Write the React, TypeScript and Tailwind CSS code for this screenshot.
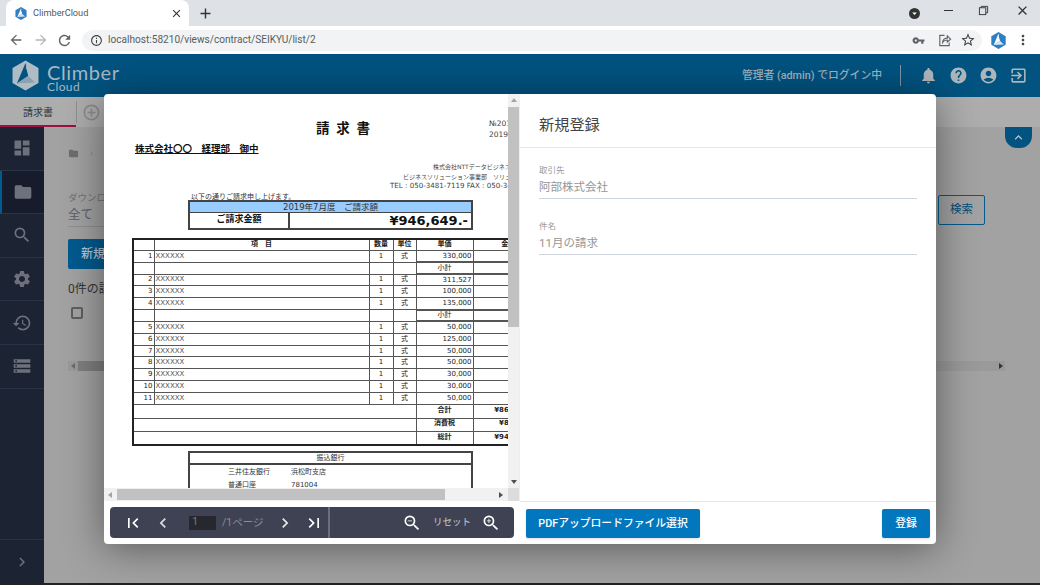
import React from "react";
import {
  MdDashboard, MdFolder, MdSearch, MdSettings, MdHistory, MdStorage, MdNotifications, MdHelp, MdAccountCircle,
  MdExitToApp, MdFirstPage, MdLastPage, MdChevronLeft, MdChevronRight, MdZoomIn, MdZoomOut, MdArrowBack,
  MdArrowForward, MdRefresh, MdInfoOutline, MdVpnKey, MdStarBorder, MdMoreVert, MdAdd, MdClose, MdAddCircleOutline,
  MdExpandLess, MdArrowDropDown,
} from "react-icons/md";

const jp = "font-['Roboto','Noto_Sans_CJK_JP',sans-serif]";
const doc = "font-['DejaVu_Sans','Noto_Sans_CJK_JP',sans-serif]";

function Logo({ a, b, c, className }: { a: string; b: string; c: string; className: string }) {
  return (
    <svg viewBox="0 0 100 112" className={className}>
      <polygon points="50,0 98,28 98,84 50,112 2,84 2,28" fill={a} />
      <polygon points="50,10 18,86 60,58" fill={b} />
      <polygon points="60,58 18,86 86,82" fill={c} />
      <polygon points="50,22 62,56 82,78 68,34" fill={a} />
    </svg>
  );
}

function ShareIcon() {
  return (
    <svg viewBox="0 0 16 16" className="h-[15px] w-[15px]" fill="none" stroke="#5f6368" strokeWidth="1.2">
      <path d="M8 2.5H3v11h10V10" />
      <path d="M6 10c0-3 2.5-4.5 5-4.5V3l3.5 3.5L11 9.5V7.5c-2 0-4 .8-5 2.5z" />
    </svg>
  );
}

function Restore() {
  return (
    <svg viewBox="0 0 12 12" className="h-[11px] w-[11px]" fill="none" stroke="#333" strokeWidth="1">
      <rect x="1.5" y="3" width="7" height="7.5" />
      <path d="M3.5 3V1.5h7V8.5H8.5" />
    </svg>
  );
}

function Chrome() {
  return (
    <div className={`shrink-0 ${jp}`}>
      <div className="flex h-[26px] items-end bg-[#dee1e6]">
        <div className="ml-[6px] flex h-[26px] w-[183px] items-center rounded-t-lg bg-white pl-[9px] pr-[6px]">
          <Logo a="#2f7fc4" b="#ffffff" c="#d5e6f3" className="h-[13px] w-[12px]" />
          <span className="ml-[6px] flex-1 text-[9.2px] text-[#55585c]">ClimberCloud</span>
          <MdClose className="text-[13px] text-[#333]" />
        </div>
        <div className="ml-[8px] flex h-[26px] items-center">
          <MdAdd className="text-[17px] text-[#333]" />
        </div>
        <div className="ml-auto flex h-[26px] items-center">
          <div className="mr-[24px] flex h-[11px] w-[11px] items-center justify-center rounded-full bg-[#333]">
            <MdArrowDropDown className="text-[11px] text-white" />
          </div>
          <div className="mb-[5px] mr-[25px] h-px w-[9px] bg-[#333]" />
          <div className="mb-[5px] mr-[26px]"><Restore /></div>
          <MdClose className="mb-[5px] mr-[10px] text-[15px] text-[#333]" />
        </div>
      </div>
      <div className="flex h-[28px] items-center bg-white">
        <MdArrowBack className="ml-[8px] text-[16px] text-[#5f6368]" />
        <MdArrowForward className="ml-[9px] text-[16px] text-[#b3b6ba]" />
        <MdRefresh className="ml-[7px] text-[17px] text-[#5f6368]" />
        <div className="ml-[9px] flex h-[21px] w-[900px] items-center rounded-full bg-[#f1f3f4] pl-[8px] pr-[6px]">
          <MdInfoOutline className="text-[13px] text-[#444]" />
          <span className="ml-[5px] text-[10.1px] text-[#5a5d60]">localhost:58210/views/contract/SEIKYU/list/2</span>
          <MdVpnKey className="ml-auto text-[13px] text-[#5f6368]" />
          <div className="ml-[12px]"><ShareIcon /></div>
          <MdStarBorder className="ml-[8px] text-[16px] text-[#444]" />
        </div>
        <Logo a="#2f7fc4" b="#ffffff" c="#d5e6f3" className="ml-[9px] h-[17px] w-[15px]" />
        <MdMoreVert className="ml-[9px] text-[16px] text-[#444]" />
      </div>
    </div>
  );
}

function Header() {
  return (
    <div className={`flex h-[43px] shrink-0 items-center bg-[#025380] ${jp}`}>
      <Logo a="#b0bcc4" b="#025380" c="#8ba2b1" className="ml-[12px] h-[31px] w-[27px]" />
      <div className="ml-[8px] flex flex-col pt-[3px] leading-none text-[#a6b8c4]">
        <span className="font-['Lato',sans-serif] text-[20px] leading-[18px] tracking-[0.6px]">Climber</span>
        <span className="font-['Lato',sans-serif] text-[12px] leading-[11px] tracking-[0.4px]">Cloud</span>
      </div>
      <span className="ml-auto pt-[2px] text-[10.8px] font-medium text-[#9fb2bf]">管理者 (admin) でログイン中</span>
      <div className="ml-[18px] h-[21px] w-px bg-[#7d99ab]" />
      <MdNotifications className="ml-[18px] text-[19px] text-[#adb6bb]" />
      <MdHelp className="ml-[11px] text-[19px] text-[#adb6bb]" />
      <MdAccountCircle className="ml-[11px] text-[19px] text-[#adb6bb]" />
      <MdExitToApp className="ml-[11px] mr-[12px] text-[19px] text-[#adb6bb]" />
    </div>
  );
}

function TabBar() {
  return (
    <div className={`flex h-[30px] shrink-0 items-stretch bg-[#adadad] ${jp}`}>
      <div className="flex w-[76px] items-center justify-center border-b-2 border-[#9d1040] pt-[3px] text-[10px] text-[#333]">請求書</div>
      <div className="my-[4px] w-px bg-[#8f8f8f]" />
      <div className="flex items-center pl-[5px]"><MdAddCircleOutline className="text-[19px] text-[#8c8c8c]" /></div>
    </div>
  );
}

function Sidebar() {
  const items = [MdDashboard, MdFolder, MdSearch, MdSettings, MdHistory, MdStorage];
  return (
    <div className="flex w-[44px] shrink-0 flex-col bg-[#1c2333]">
      {items.map((Icon, i) => (
        <div
          key={i}
          className={`flex h-[43.6px] items-center justify-center border-b border-[#2b3346] ${i === 1 ? "border-l-2 border-l-[#025a8f] bg-[#161c2c]" : ""}`}
        >
          <Icon className="text-[20px] text-[#6d717c]" />
        </div>
      ))}
      <div className="mt-auto flex h-[44px] items-center justify-center border-t border-[#2b3346]">
        <MdChevronRight className="text-[18px] text-[#6d717c]" />
      </div>
    </div>
  );
}

function Main() {
  return (
    <div className={`flex flex-1 flex-col bg-[#a2a2a2] ${jp}`}>
      <div className="flex h-[21px] justify-end pr-[8px]">
        <div className="flex h-[21px] w-[27px] items-center justify-center rounded-b-xl bg-[#025380]">
          <MdExpandLess className="text-[15px] text-[#b9c6cf]" />
        </div>
      </div>
      <div className="px-[24px]">
        <div className="flex items-center gap-[8px]">
          <MdFolder className="text-[11px] text-[#6e6e6e]" />
          <MdChevronRight className="text-[9px] text-[#858585]" />
        </div>
        <div className="mt-[33px] flex items-start justify-between pr-[31px]">
          <div>
            <div className="text-[9.5px] leading-[12px] text-[#717171]">ダウンロード</div>
            <div className="mt-[3px] w-[200px] border-b border-[#8f8f8f] pb-[3px] text-[12.5px] leading-[16px] text-[#5d5d5d]">全て</div>
          </div>
          <div className="mt-[3px] flex h-[30px] w-[47px] items-center justify-center rounded-[2px] border border-[#045a8a] text-[11.5px] text-[#034e78]">検索</div>
        </div>
        <div className="mt-[12px] flex h-[30px] w-[74px] items-center justify-center rounded-[2px] bg-[#025a8f] text-[12px] font-medium text-[#b6c8d4]">新規登録</div>
        <div className="mt-[12px] text-[12px] leading-[16px] text-[#333]">0件の該当データ</div>
        <div className="ml-[3px] mt-[10px] h-[12px] w-[12px] rounded-[2px] border-2 border-[#5e5e5e]" />
        <div className="mt-[42px] mr-[11px] flex h-[10px] items-center bg-[#9a9a9a]">
          <div className="ml-[3px] h-0 w-0 border-y-[3px] border-r-[4px] border-y-transparent border-r-[#6b6b6b]" />
          <div className="ml-[3px] h-[10px] w-[300px] bg-[#7f7f7f]" />
          <div className="ml-auto mr-[2px] h-0 w-0 border-y-[3px] border-l-[4px] border-y-transparent border-l-[#333]" />
        </div>
      </div>
    </div>
  );
}

const td = "border border-[#555] px-[1px] align-middle leading-none overflow-hidden whitespace-nowrap";

function Row({ n, price }: { n: string; price: string }) {
  return (
    <tr className="h-[11.85px]">
      <td className={`${td} text-right`}>{n}</td>
      <td className={`${td} text-[#555]`}>XXXXXX</td>
      <td className={`${td} text-center`}>1</td>
      <td className={`${td} text-center`}>式</td>
      <td className={`${td} text-right`}>{price}</td>
      <td className={td}></td>
    </tr>
  );
}

function Sub() {
  return (
    <tr className="h-[11.85px]">
      <td className={td}></td>
      <td className={td}></td>
      <td className={td}></td>
      <td className={td}></td>
      <td className={`${td} border-y-2 border-[#222] text-center`}>小計</td>
      <td className={`${td} border-y-2 border-[#222]`}></td>
    </tr>
  );
}

function Total({ label, v }: { label: string; v: string }) {
  return (
    <tr className="h-[13.7px] font-bold">
      <td colSpan={4} className={td}></td>
      <td className={`${td} pb-[2px] text-center`}>{label}</td>
      <td className={`${td} pb-[2px] pr-[21px] text-right`}>{v}</td>
    </tr>
  );
}

function PdfPage() {
  return (
    <div className={`w-[520px] text-[#222] ${doc}`}>
      <div className="flex h-[45px] items-start">
        <div className="ml-[212px] mt-[25px] text-[13.5px] font-bold leading-[18px] tracking-[1px] text-[#111]">請 求 書</div>
        <div className="ml-[118px] mt-[24px] whitespace-nowrap text-[7.5px] leading-[11px] text-[#444]">
          <div>№2019070001</div>
          <div>2019年7月31日</div>
        </div>
      </div>
      <div className="ml-[31px] mt-[3px] h-[14px] text-[9.5px] font-bold leading-[14px] text-[#111] underline">株式会社〇〇　経理部　御中</div>
      <div className="mt-[6px] whitespace-nowrap text-[6px] leading-[9.5px] text-[#444]">
        <div className="ml-[329px]">株式会社NTTデータビジネスシステムズ</div>
        <div className="ml-[299px]">ビジネスソリューション事業部　ソリューション</div>
        <div className="ml-[286px] text-[7.1px]">TEL : 050-3481-7119 FAX : 050-3481-7120</div>
      </div>
      <div className="ml-[87px] mt-[2px] h-[7px] text-[7px] leading-[9px] text-[#333]">以下の通りご請求申し上げます。</div>
      <div className="ml-[84px] w-[285px] border-2 border-[#444]">
        <div className="h-[11px] border-b border-[#444] bg-[#99ccff] text-center text-[8.5px] leading-[11px] text-[#333]">2019年7月度　ご請求額</div>
        <div className="flex h-[15px] items-center">
          <div className="flex h-full w-[100px] items-center justify-center border-r-2 border-[#444] text-[9px] font-bold text-[#111]">ご請求金額</div>
          <div className="flex-1 pr-[3px] text-right text-[13px] font-bold leading-none text-[#111]">¥946,649.-</div>
        </div>
      </div>
      <table className="ml-[28px] mt-[8px] w-[420px] table-fixed border-collapse border-2 border-[#222] text-[7px]">
        <colgroup>
          <col className="w-[21px]" />
          <col className="w-[215px]" />
          <col className="w-[24px]" />
          <col className="w-[23px]" />
          <col className="w-[57px]" />
          <col className="w-[80px]" />
        </colgroup>
        <tbody>
          <tr className="h-[11.85px] font-bold">
            <td className={td}></td>
            <td className={`${td} text-center`}>項　目</td>
            <td className={`${td} text-center`}>数量</td>
            <td className={`${td} text-center`}>単位</td>
            <td className={`${td} text-center`}>単価</td>
            <td className={`${td} pr-[10px] text-center`}>金額</td>
          </tr>
          <Row n="1" price="330,000" />
          <Sub />
          <Row n="2" price="311,527" />
          <Row n="3" price="100,000" />
          <Row n="4" price="135,000" />
          <Sub />
          <Row n="5" price="50,000" />
          <Row n="6" price="125,000" />
          <Row n="7" price="50,000" />
          <Row n="8" price="50,000" />
          <Row n="9" price="30,000" />
          <Row n="10" price="30,000" />
          <Row n="11" price="50,000" />
          <Total label="合計" v="¥860,590" />
          <Total label="消費税" v="¥86,059" />
          <Total label="総計" v="¥946,649" />
        </tbody>
      </table>
      <div className="ml-[84px] mt-[5px] w-[285px] border-x-2 border-t-2 border-[#444] text-[7px] text-[#333]">
        <div className="h-[12px] border-b-2 border-[#444] text-center leading-[10px]">振込銀行</div>
        <div className="flex h-[12px] items-end pl-[38px]"><span className="w-[63px]">三井住友銀行</span><span>浜松町支店</span></div>
        <div className="flex h-[13px] items-end pl-[38px]"><span className="w-[63px]">普通口座</span><span>781004</span></div>
      </div>
    </div>
  );
}

function Viewer() {
  return (
    <div className="flex w-[416px] shrink-0 flex-col">
      <div className="flex h-[407px] w-[416px] shrink-0 flex-col border-r border-[#eee]">
        <div className="flex min-h-0 flex-1">
          <div className="min-w-0 flex-1 overflow-hidden"><PdfPage /></div>
          <div className="flex w-[11px] shrink-0 flex-col items-center bg-[#f1f1f1]">
            <div className="mt-[4px] h-0 w-0 border-x-[3px] border-b-[4px] border-x-transparent border-b-[#a3a3a3]" />
            <div className="mt-[5px] h-[220px] w-full bg-[#c1c1c1]" />
            <div className="mt-auto mb-[4px] h-0 w-0 border-x-[3px] border-t-[4px] border-x-transparent border-t-[#505050]" />
          </div>
        </div>
        <div className="flex h-[13px] shrink-0 items-center bg-[#f1f1f1]">
          <div className="ml-[4px] h-0 w-0 border-y-[3px] border-r-[4px] border-y-transparent border-r-[#a3a3a3]" />
          <div className="ml-[5px] h-[11px] w-[328px] bg-[#c1c1c1]" />
          <div className="ml-[54px] h-0 w-0 border-y-[3px] border-l-[4px] border-y-transparent border-l-[#505050]" />
          <div className="ml-auto h-[13px] w-[11px] bg-[#dcdcdc]" />
        </div>
      </div>
      <div className={`flex flex-1 items-center pl-[6px] pr-[6px] ${jp}`}>
        <div className="flex h-[31px] w-[404px] items-center rounded-[4px] bg-[#3f4252] text-[#c9cbd1]">
          <div className="flex h-full w-[220px] items-center border-r-2 border-[#6b6e7b] pl-[13px]">
            <MdFirstPage className="text-[20px] text-white" />
            <MdChevronLeft className="ml-[10px] text-[20px] text-[#dfe0e4]" />
            <div className="ml-[16px] flex h-[14px] w-[27px] items-center bg-[#26282f] pl-[3px] text-[11px] text-[#777]">1</div>
            <span className="ml-[6px] text-[10.5px] text-[#8b8d98]">/1ページ</span>
            <MdChevronRight className="ml-[11px] text-[20px] text-[#e8e9ec]" />
            <MdLastPage className="ml-[9px] text-[20px] text-white" />
          </div>
          <MdZoomOut className="ml-[72px] text-[20px] text-white" />
          <span className="ml-[11px] text-[9.5px] font-medium text-[#b4b6bd]">リセット</span>
          <MdZoomIn className="ml-[10px] text-[20px] text-white" />
        </div>
      </div>
    </div>
  );
}

function Field({ label, value }: { label: string; value: string }) {
  return (
    <div className="mx-[19px] w-[378px] border-b border-[#cfd5e0] pb-[2px]">
      <div className="text-[8.5px] leading-[12px] text-[#9a9a9a]">{label}</div>
      <div className="mt-[2px] text-[11.5px] leading-[18px] text-[#969696]">{value}</div>
    </div>
  );
}

function Form() {
  return (
    <div className={`flex min-w-0 flex-1 flex-col ${jp}`}>
      <div className="flex h-[54px] shrink-0 items-center border-b border-[#e3e6ea] pl-[19px] pt-[10px] text-[15.2px] text-[#444]">新規登録</div>
      <div className="flex flex-1 flex-col gap-[21px] pt-[16px]">
        <Field label="取引先" value="阿部株式会社" />
        <Field label="件名" value="11月の請求" />
      </div>
    </div>
  );
}

function Modal() {
  return (
    <div className={`absolute left-[104px] top-[94px] flex h-[450px] w-[832px] flex-col overflow-hidden rounded-[4px] bg-white shadow-[0_4px_40px_rgba(0,0,0,0.45)] ${jp}`}>
      <div className="flex h-full">
        <Viewer />
        <div className="flex min-w-0 flex-1 flex-col">
          <div className="flex min-h-0 flex-1"><Form /></div>
          <div className="flex h-[43px] shrink-0 items-center justify-between border-t border-[#e3e6ea] pl-[6px] pr-[6px]">
            <div className="flex h-[29px] w-[174px] items-center justify-center rounded-[2px] bg-[#0277bd] pt-[2px] text-[10.8px] font-medium text-white shadow-sm">PDFアップロードファイル選択</div>
            <div className="flex h-[29px] w-[48px] items-center justify-center rounded-[2px] bg-[#0277bd] pt-[2px] text-[10.8px] font-medium text-white shadow-sm">登録</div>
          </div>
        </div>
      </div>
    </div>
  );
}

export default function App() {
  return (
    <div className="relative flex h-[585px] w-[1040px] flex-col overflow-hidden bg-[#111]">
      <Chrome />
      <Header />
      <TabBar />
      <div className="flex min-h-0 flex-1">
        <Sidebar />
        <Main />
      </div>
      <div className="h-[2px] shrink-0 bg-[#222]" />
      <Modal />
    </div>
  );
}
